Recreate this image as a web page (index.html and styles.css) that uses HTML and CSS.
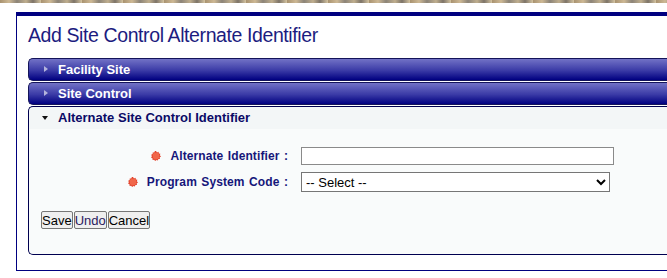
FILE: index.html
```
<!DOCTYPE html>
<html lang="en">
<head>
    <meta charset="UTF-8">
    <title>Add Site Control Alternate Identifier</title>
    <link rel="stylesheet" href="styles.css">
</head>
<body>
    <div class="topStrip"></div>
    <main class="page">
        <h1 class="pageTitle">Add Site Control Alternate Identifier</h1>
        <div class="accordion">
            <div class="accHeader"><span class="arrowRight"></span>Facility Site</div>
            <div class="accHeader"><span class="arrowRight"></span>Site Control</div>
            <div class="accHeader active"><span class="arrowDown"></span>Alternate Site Control Identifier</div>
            <div class="accContent">
                <div class="formGrid">
                    <label class="formLabel" for="altId"><svg class="reqIcon" viewBox="0 0 10 10"><polygon points="5,0 6,1.4 7.6,0.8 7.8,2.4 9.4,2.8 8.8,4.3 10,5.4 8.6,6.4 9,8 7.4,8.1 6.8,9.6 5.4,8.9 4.1,10 3.2,8.7 1.6,8.9 1.5,7.3 0,6.6 0.9,5.2 0.2,3.8 1.7,3.1 1.7,1.5 3.3,1.5 3.9,0.1" fill="#e2412a"/><circle cx="5" cy="5" r="3.4" fill="#f0674a"/></svg>Alternate Identifier :</label>
                    <input type="text" id="altId" class="textInput">
                    <label class="formLabel" for="psCode"><svg class="reqIcon" viewBox="0 0 10 10"><polygon points="5,0 6,1.4 7.6,0.8 7.8,2.4 9.4,2.8 8.8,4.3 10,5.4 8.6,6.4 9,8 7.4,8.1 6.8,9.6 5.4,8.9 4.1,10 3.2,8.7 1.6,8.9 1.5,7.3 0,6.6 0.9,5.2 0.2,3.8 1.7,3.1 1.7,1.5 3.3,1.5 3.9,0.1" fill="#e2412a"/><circle cx="5" cy="5" r="3.4" fill="#f0674a"/></svg>Program System Code :</label>
                    <select id="psCode" class="selectInput">
                        <option>-- Select --</option>
                    </select>
                </div>
                <div class="btnRow"><button class="formBtn">Save</button><button class="formBtn undo">Undo</button><button class="formBtn">Cancel</button></div>
            </div>
        </div>
    </main>
</body>
</html>
```

FILE: styles.css
```
*{
    margin: 0; padding: 0;
    box-sizing: border-box;
}
html, body{
    overflow: hidden;
}
body{
    font-family: "Liberation Sans", Arial, sans-serif;
    background-color: white;
}
.topStrip{
    height: 3px;
    background: repeating-linear-gradient(90deg, #a89270 0, #cdb894 9px, #8c8478 17px, #bfae8e 26px, #7d7468 33px, #d4c3a0 41px);
}
.page{
    margin-top: 9px;
    margin-left: 16px;
    margin-right: -60px;
    height: 259px;
    border-top: 4px solid #000080;
    border-left: 1px solid #000080;
    border-bottom: 1px solid #000080;
}
.pageTitle{
    margin: 8px 0 11px 11px;
    font-size: 19.5px;
    line-height: 23px;
    letter-spacing: -0.4px;
    font-weight: normal;
    color: #1c1c80;
}
.accordion{
    margin-left: 11px;
}
.accHeader{
    height: 23px;
    margin-bottom: 1px;
    padding-left: 29px;
    position: relative;
    border: 1px solid #14145a;
    border-right: 0;
    border-radius: 5px 0 0 5px;
    background: linear-gradient(#7272c6, #3a3aa6 55%, #000080);
    color: white;
    font-size: 13px;
    font-weight: bold;
    line-height: 21px;
}
.accHeader.active{
    margin-bottom: 0;
    border-color: #000050;
    border-radius: 5px 0 0 0;
    border-bottom: 0;
    background: #f3f6f7;
    color: #0a0a66;
}
.arrowRight{
    position: absolute;
    left: 15px;
    top: 7px;
    border-left: 4px solid #b4b4dc;
    border-top: 3.5px solid transparent;
    border-bottom: 3.5px solid transparent;
}
.arrowDown{
    position: absolute;
    left: 13px;
    top: 9px;
    border-top: 4px solid #111;
    border-left: 3.5px solid transparent;
    border-right: 3.5px solid transparent;
}
.accContent{
    height: 126px;
    padding-top: 18px;
    background-color: #f9fbfb;
    border-left: 1px solid #000050;
    border-bottom: 1px solid #000050;
    border-radius: 0 0 0 5px;
}
.formGrid{
    display: grid;
    grid-template-columns: 259px auto;
    column-gap: 13px;
    row-gap: 7px;
    align-items: center;
    justify-items: start;
}
.formLabel{
    justify-self: end;
    display: flex;
    align-items: center;
    gap: 9px;
    font-size: 12px;
    font-weight: bold;
    letter-spacing: 0.1px;
    word-spacing: 1px;
    color: #16167a;
}
.reqIcon{
    width: 10px;
    height: 10px;
}
.textInput{
    width: 313px;
    height: 18px;
    border: 1px solid #8a8a8a;
    background-color: white;
    outline: 0;
}
.selectInput{
    width: 309px;
    height: 20px;
    border: 1px solid #767676;
    background-color: white;
    font-family: "Liberation Sans", Arial, sans-serif;
    font-size: 13px;
    color: black;
}
.btnRow{
    margin-top: 19px;
    padding-left: 12px;
    display: flex;
    gap: 1px;
}
.formBtn{
    height: 18px;
    padding: 0;
    border: 1px solid #767676;
    border-radius: 2px;
    background-color: #efefef;
    font-family: "Liberation Sans", Arial, sans-serif;
    font-size: 13px;
    color: black;
}
.formBtn.undo{
    color: #2b1a5e;
}
```
